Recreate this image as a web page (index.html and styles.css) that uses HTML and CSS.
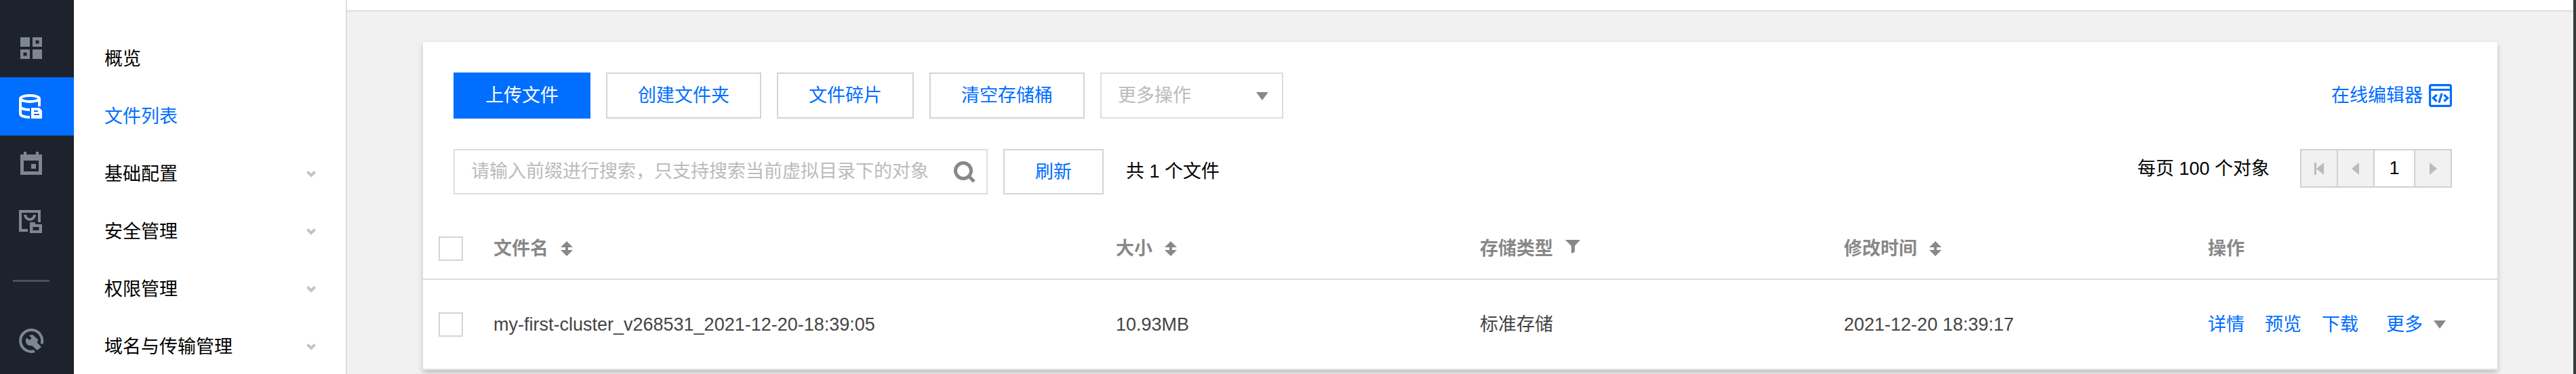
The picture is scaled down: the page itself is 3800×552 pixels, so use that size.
FILE: index.html
```html
<!DOCTYPE html>
<html lang="zh-CN">
<head>
<meta charset="utf-8">
<title>文件列表</title>
<link rel="stylesheet" href="styles.css">
</head>
<body>
<div class="app">
  <nav class="rail" aria-label="产品">
    <a class="rail-item" href="#" aria-label="概览">
      <svg class="rail-icon" viewBox="0 0 40 40"><path fill-rule="evenodd" d="M4 4h14v14H4zM22 4h14v14H22zM26.500 8.500v5h5v-5zM4 22h14v14H4zM8.500 26.500v5h5v-5zM22 22h14v14H22z"/></svg>
    </a>
    <a class="rail-item rail-item-active" href="#" aria-label="存储桶列表">
      <svg class="rail-icon" viewBox="0 0 40 40"><g fill="none" stroke="currentColor" stroke-width="4"><ellipse cx="18" cy="8.500" rx="14" ry="4.500"/><path d="M4 8.500V31c0 3 6 5 14 5M4 20c0 3 6 5 14 5M32 8.500V20"/></g><path fill-rule="evenodd" d="M20 22h12l4 4v12H20zM24 26v2h6v-2zM24 31v2h8v-2z"/></svg>
    </a>
    <a class="rail-item" href="#" aria-label="数据监控">
      <svg class="rail-icon" viewBox="0 0 40 40"><path fill-rule="evenodd" d="M9 1h4v4h14V1h4v4h5v30H4V5h5zM9 14v16h22V14z"/><path d="M20 19h7v7h-7z"/></svg>
    </a>
    <a class="rail-item" href="#" aria-label="应用集成">
      <svg class="rail-icon" viewBox="0 0 40 40"><g fill="none" stroke="currentColor" stroke-width="4"><path d="M15 31H4V3h28v16"/><path d="M11 8a7 7 0 0 0 14 0"/></g><path fill-rule="evenodd" d="M18 19h7l2 3h9v13H18zM22.500 26v5h9v-5z"/></svg>
    </a>
    <hr class="rail-divider">
    <a class="rail-item" href="#" aria-label="常用工具">
      <svg class="rail-icon" viewBox="0 0 40 40"><path fill="none" stroke="currentColor" stroke-width="4" d="M35.500 24.500A16 16 0 1 0 25 35.200"/><path d="M17 12l5-1 8 7-1 5 6 6-6 5-8-7c-5 1-9-2-9.300-7l1.300-4.500 5 3.500 2.500-3z"/></svg>
    </a>
  </nav>

  <nav class="menu" aria-label="存储桶">
    <a class="menu-item" href="#">概览</a>
    <a class="menu-item menu-item-active" href="#">文件列表</a>
    <a class="menu-item" href="#">基础配置<svg class="chevron" viewBox="0 0 14 10"><path d="M1.500 1.500L7 7l5.500-5.500"/></svg></a>
    <a class="menu-item" href="#">安全管理<svg class="chevron" viewBox="0 0 14 10"><path d="M1.500 1.500L7 7l5.500-5.500"/></svg></a>
    <a class="menu-item" href="#">权限管理<svg class="chevron" viewBox="0 0 14 10"><path d="M1.500 1.500L7 7l5.500-5.500"/></svg></a>
    <a class="menu-item" href="#">域名与传输管理<svg class="chevron" viewBox="0 0 14 10"><path d="M1.500 1.500L7 7l5.500-5.500"/></svg></a>
  </nav>

  <div class="page">
    <header class="topbar"></header>
    <main class="content">
      <section class="card">
        <div class="toolbar">
          <button class="btn btn-primary" type="button">上传文件</button>
          <button class="btn" type="button">创建文件夹</button>
          <button class="btn" type="button">文件碎片</button>
          <button class="btn" type="button">清空存储桶</button>
          <div class="picker">
            <select class="picker-select" aria-label="更多操作"><option>更多操作</option></select>
            <svg class="caret picker-caret" viewBox="0 0 18 12"><path d="M0 0h18l-9 12z"/></svg>
          </div>
          <a class="editor-link" href="#">在线编辑器
            <svg class="editor-icon" viewBox="0 0 32 32"><rect x="1.500" y="1.500" width="29" height="29" rx="2"/><path d="M2 8h28M11 15l-5 4.500 5 4.500M21 15l5 4.500-5 4.500M18 13l-4 13"/></svg>
          </a>
        </div>

        <div class="toolbar toolbar-search">
          <div class="search">
            <input class="search-input" type="text" aria-label="搜索" placeholder="请输入前缀进行搜索，只支持搜索当前虚拟目录下的对象">
            <button class="search-button" type="button" aria-label="搜索">
              <svg class="search-icon" viewBox="0 0 32 32"><circle cx="14" cy="14" r="11.500"/><path d="M22 22l8 8"/></svg>
            </button>
          </div>
          <button class="btn btn-refresh" type="button">刷新</button>
          <p class="count">共 1 个文件</p>
          <div class="paging">
            <span class="page-size">每页 100 个对象</span>
            <div class="pager">
              <button class="pager-button" type="button" aria-label="第一页"><svg class="pager-icon" viewBox="0 0 18 18"><path d="M2 0h3v18H2zM16 0v18L5 9z"/></svg></button>
              <button class="pager-button" type="button" aria-label="上一页"><svg class="pager-icon" viewBox="0 0 18 18"><path d="M14 0v18L3 9z"/></svg></button>
              <span class="pager-current">1</span>
              <button class="pager-button" type="button" aria-label="下一页"><svg class="pager-icon" viewBox="0 0 18 18"><path d="M4 0v18l11-9z"/></svg></button>
            </div>
          </div>
        </div>

        <table class="files">
          <colgroup><col class="col-check"><col class="col-name"><col class="col-data"><col class="col-data"><col class="col-data"><col></colgroup>
          <thead>
            <tr>
              <th class="check-cell"><input class="check" type="checkbox" aria-label="全选"></th>
              <th><span class="head">文件名<svg class="sort" viewBox="0 0 18 22"><path d="M9 0l9 9h-7v4h7l-9 9-9-9h7V9H0z"/></svg></span></th>
              <th><span class="head">大小<svg class="sort" viewBox="0 0 18 22"><path d="M9 0l9 9h-7v4h7l-9 9-9-9h7V9H0z"/></svg></span></th>
              <th><span class="head">存储类型<svg class="filter" viewBox="0 0 22 26"><path d="M0 0h22l-8 9v9l-5 2V9z"/></svg></span></th>
              <th><span class="head">修改时间<svg class="sort" viewBox="0 0 18 22"><path d="M9 0l9 9h-7v4h7l-9 9-9-9h7V9H0z"/></svg></span></th>
              <th><span class="head">操作</span></th>
            </tr>
          </thead>
          <tbody>
            <tr>
              <td class="check-cell"><input class="check" type="checkbox" aria-label="选择 my-first-cluster_v268531_2021-12-20-18:39:05"></td>
              <td>my-first-cluster_v268531_2021-12-20-18:39:05</td>
              <td>10.93MB</td>
              <td>标准存储</td>
              <td>2021-12-20 18:39:17</td>
              <td>
                <div class="actions">
                  <a class="action" href="#">详情</a>
                  <a class="action" href="#">预览</a>
                  <a class="action" href="#">下载</a>
                  <button class="action action-more" type="button">更多<svg class="caret" viewBox="0 0 18 12"><path d="M0 0h18l-9 12z"/></svg></button>
                </div>
              </td>
            </tr>
          </tbody>
        </table>
      </section>
    </main>
  </div>
</div>
</body>
</html>
```
FILE: styles.css
```css
* {
  box-sizing: border-box;
}

body {
  margin: 0;
  background: #f1f1f1;
  color: #000;
  font-family: "Liberation Sans", "Noto Sans CJK SC", sans-serif;
  font-size: 27px;
  line-height: 40px;
}

a {
  color: #006eff;
  text-decoration: none;
}

button,
input,
select {
  margin: 0;
  font: inherit;
}

svg {
  display: block;
  flex: none;
  fill: currentColor;
}

.app {
  display: flex;
  min-height: 100vh;
  border-right: 4px solid #353d3f;
}

/* Product rail */
.rail {
  flex: none;
  width: 109px;
  padding-top: 28px;
  background: #1e222d;
}

.rail-item {
  display: flex;
  align-items: center;
  height: 86px;
  padding-left: 26px;
  color: #7d878f;
}

.rail-item-active {
  background: #006eff;
  color: #fff;
}

.rail-icon {
  width: 40px;
  height: 40px;
}

.rail-divider {
  width: 54px;
  height: 3px;
  margin: 41px 0 44px 19px;
  border: 0;
  background: #4b515b;
}

/* Bucket menu */
.menu {
  flex: none;
  width: 403px;
  padding-top: 44px;
  border-right: 2px solid #ddd;
  background: #fff;
}

.menu-item {
  display: flex;
  align-items: center;
  justify-content: space-between;
  height: 85px;
  padding: 0 44px 0 45px;
  color: #000;
}

.menu-item-active {
  color: #006eff;
}

.chevron {
  width: 14px;
  height: 10px;
  fill: none;
  stroke: #bfc4c8;
  stroke-width: 4;
}

/* Page */
.page {
  flex: 1;
  min-width: 0;
}

.topbar {
  height: 17px;
  border-bottom: 2px solid #ddd;
  background: #fff;
}

.content {
  padding: 45px 112px 6px;
}

.card {
  padding-top: 45px;
  background: #fff;
  box-shadow: 0 4px 8px rgba(0, 0, 0, 0.22);
}

.toolbar {
  display: flex;
  align-items: center;
  gap: 23px;
  padding: 0 67px 0 45px;
}

.toolbar-search {
  align-items: flex-start;
  padding-top: 45px;
  padding-bottom: 35px;
}

.btn {
  height: 68px;
  padding: 0 45px;
  border: 2px solid #cfd5de;
  background: #fff;
  color: #006eff;
  white-space: nowrap;
}

.btn-primary {
  border-color: #006eff;
  background: #006eff;
  color: #fff;
}

.btn-refresh {
  height: 67px;
}

.picker {
  position: relative;
  width: 270px;
}

.picker-select {
  display: block;
  width: 100%;
  height: 68px;
  padding: 0 48px 0 24px;
  border: 2px solid #ddd;
  border-radius: 0;
  background: #fff;
  color: #bbb;
  appearance: none;
}

.caret {
  width: 18px;
  height: 12px;
  color: #888;
}

.picker-caret {
  position: absolute;
  top: 29px;
  right: 22px;
  pointer-events: none;
}

.editor-link {
  display: flex;
  align-items: center;
  gap: 9px;
  margin-left: auto;
}

.editor-icon {
  width: 34px;
  height: 34px;
  fill: none;
  stroke: currentColor;
  stroke-width: 3;
}

.search {
  display: flex;
  align-items: center;
  width: 788px;
  height: 67px;
  padding: 0 16px 0 24px;
  border: 2px solid #ddd;
}

.search-input {
  flex: 1;
  min-width: 0;
  height: 60px;
  padding: 0;
  border: 0;
  outline: 0;
  background: none;
}

.search-input::placeholder {
  color: #bbb;
  opacity: 1;
}

.search-button {
  padding: 0;
  border: 0;
  background: none;
  color: #888;
}

.search-icon {
  width: 32px;
  height: 32px;
  fill: none;
  stroke: currentColor;
  stroke-width: 5;
}

.count {
  margin: 0 0 0 10px;
  line-height: 67px;
}

.paging {
  display: flex;
  align-items: center;
  gap: 45px;
  margin-left: auto;
}

.pager {
  display: flex;
  height: 57px;
  border: 2px solid #d1d1d1;
}

.pager-button {
  display: flex;
  align-items: center;
  justify-content: center;
  width: 54px;
  padding: 0;
  border: 0;
  border-right: 2px solid #d1d1d1;
  background: #f1f1f1;
  color: #bbb;
}

.pager-button:last-child {
  border-right: 0;
  border-left: 2px solid #d1d1d1;
}

.pager-icon {
  width: 18px;
  height: 18px;
}

.pager-current {
  width: 58px;
  line-height: 53px;
  text-align: center;
}

/* File table */
.files {
  width: 100%;
  border-collapse: separate;
  border-spacing: 0;
  table-layout: fixed;
  text-align: left;
}

.col-check {
  width: 82px;
}

.col-name {
  width: 30%;
}

.col-data {
  width: 17.55%;
}

.files th {
  height: 91px;
  padding: 0 22px;
  border-bottom: 2px solid #ddd;
  color: #888;
}

.files td {
  height: 133px;
  padding: 0 22px;
  border-bottom: 2px solid #e5e5e5;
  color: #444;
}

.files .check-cell {
  padding: 0 0 0 23px;
}

.check {
  display: block;
  width: 36px;
  height: 36px;
  margin: 0;
  border: 2px solid #cfd5de;
  background: #fff;
  appearance: none;
}

.head {
  display: flex;
  align-items: center;
  gap: 18px;
}

.sort {
  width: 18px;
  height: 22px;
}

.filter {
  width: 22px;
  height: 26px;
}

.actions {
  display: flex;
  align-items: center;
  gap: 30px;
}

.action {
  color: #006eff;
}

.action-more {
  display: flex;
  align-items: center;
  gap: 16px;
  margin-left: 11px;
  padding: 0;
  border: 0;
  background: none;
}
```
